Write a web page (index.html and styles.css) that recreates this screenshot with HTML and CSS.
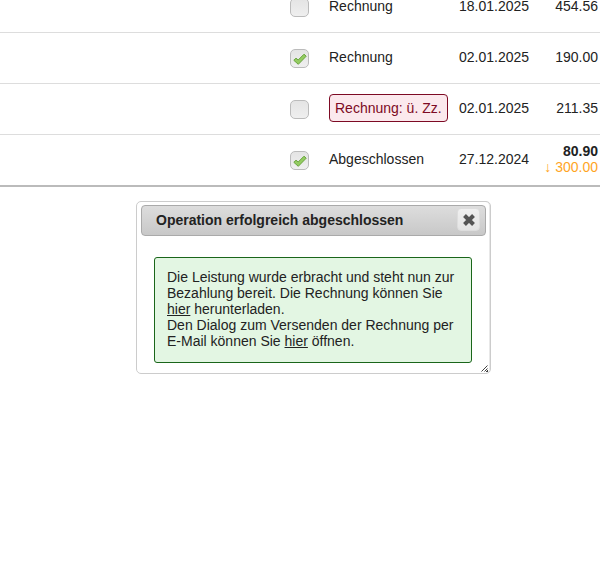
FILE: index.html
```html
<!DOCTYPE html>
<html lang="de">
<head>
    <meta charset="UTF-8">
    <meta name="viewport" content="width=device-width, initial-scale=1.0">
    <title>Leistungen</title>
    <link rel="stylesheet" href="styles.css">
</head>
<body>
    <table class="invoices">
        <tbody>
            <tr>
                <td class="select"><label class="check"><input type="checkbox" aria-label="Rechnung 18.01.2025"><svg viewBox="0 0 14 14"><path d="M0.8 8.3 3 6.2 5.2 8 11 2.2 13.2 4.2 5.3 12.3Z"/></svg></label></td>
                <td class="status">Rechnung</td>
                <td class="date">18.01.2025</td>
                <td class="amount">454.56</td>
            </tr>
            <tr>
                <td class="select"><label class="check"><input type="checkbox" aria-label="Rechnung 02.01.2025" checked><svg viewBox="0 0 14 14"><path d="M0.8 8.3 3 6.2 5.2 8 11 2.2 13.2 4.2 5.3 12.3Z"/></svg></label></td>
                <td class="status">Rechnung</td>
                <td class="date">02.01.2025</td>
                <td class="amount">190.00</td>
            </tr>
            <tr>
                <td class="select"><label class="check"><input type="checkbox" aria-label="Rechnung: ü. Zz. 02.01.2025"><svg viewBox="0 0 14 14"><path d="M0.8 8.3 3 6.2 5.2 8 11 2.2 13.2 4.2 5.3 12.3Z"/></svg></label></td>
                <td class="status"><span class="overdue">Rechnung: ü. Zz.</span></td>
                <td class="date">02.01.2025</td>
                <td class="amount">211.35</td>
            </tr>
            <tr>
                <td class="select"><label class="check"><input type="checkbox" aria-label="Abgeschlossen 27.12.2024" checked><svg viewBox="0 0 14 14"><path d="M0.8 8.3 3 6.2 5.2 8 11 2.2 13.2 4.2 5.3 12.3Z"/></svg></label></td>
                <td class="status">Abgeschlossen</td>
                <td class="date">27.12.2024</td>
                <td class="amount"><strong>80.90</strong><br><span class="open">↓ 300.00</span></td>
            </tr>
        </tbody>
    </table>

    <div class="dialog" role="dialog" aria-labelledby="dialog-title">
        <div class="titlebar">
            <span id="dialog-title">Operation erfolgreich abgeschlossen</span>
            <button type="button" class="close" id="close-dialog" aria-label="Schliessen">
                <svg viewBox="0 0 14 14"><path d="M2.5 2.5 11.5 11.5M11.5 2.5 2.5 11.5"/></svg>
            </button>
        </div>
        <div class="message">
            Die Leistung wurde erbracht und steht nun zur Bezahlung bereit. Die Rechnung können Sie <a href="#">hier</a> herunterladen.<br>
            Den Dialog zum Versenden der Rechnung per E-Mail können Sie <a href="#">hier</a> öffnen.
        </div>
        <svg class="grip" viewBox="0 0 7 7"><path d="M0.5 6.5 6.5 0.5M3.5 6.5 6.5 3.5"/><path d="M5 7 7 5V7Z"/></svg>
    </div>

    <script>
        document.getElementById('close-dialog').addEventListener('click', () => {
            document.querySelector('.dialog').style.display = 'none';
        });
    </script>
</body>
</html>
```
FILE: styles.css
```css
body {
    margin: 0;
    overflow: hidden;
    background: white;
    color: #222;
    font-family: "Liberation Sans", Arial, sans-serif;
    font-size: 14px;
    line-height: 16px;
}
/* the list is scrolled, its first row is cut off at the top */
.invoices {
    width: 100%;
    margin-top: -18px;
    border-collapse: separate;
    border-spacing: 0;
    table-layout: fixed;
    border-bottom: 1px solid #bbb;
}
.invoices td {
    height: 48px;
    padding: 0 0 2px;
    border-bottom: 1px solid #ddd;
    vertical-align: middle;
}
.invoices tr:last-child td {
    border-bottom-color: #bbb;
}
.invoices .select {
    padding-right: 20px;
}
.invoices .status {
    width: 130px;
}
.invoices .date {
    width: 80px;
}
.invoices .amount {
    width: 59px;
    padding-right: 2px;
    text-align: right;
}
.open {
    color: #ffa51f;
}
.overdue {
    display: inline-block;
    padding: 5px;
    border: 1px solid #7d0a24;
    border-radius: 4px;
    background: #fbe9ed;
    color: #7d0a24;
}
.check {
    display: grid;
    width: 19px;
    height: 19px;
    margin: 3px 0 0 auto;
    place-items: center;
}
.check input,
.check svg {
    grid-area: 1 / 1;
}
.check input {
    appearance: none;
    box-sizing: border-box;
    width: 19px;
    height: 19px;
    margin: 0;
    border: 1px solid #bbb;
    border-radius: 5px;
    background: linear-gradient(#e4e4e4, #efefef);
}
.check svg {
    width: 14px;
    height: 14px;
    fill: #94cc62;
    stroke: #68a33c;
    stroke-linejoin: round;
    visibility: hidden;
    pointer-events: none;
}
.check input:checked + svg {
    visibility: visible;
}
.dialog {
    position: relative;
    box-sizing: border-box;
    width: 355px;
    margin: 14px 0 0 136px;
    padding: 3px 4px;
    border: 1px solid #ccc;
    border-radius: 5px;
    background: white;
    box-shadow: inset -1px 0 #e8e8e8;
}
.titlebar {
    display: flex;
    align-items: center;
    justify-content: space-between;
    box-sizing: border-box;
    height: 31px;
    padding: 0 5px 2px 14px;
    border: 1px solid #aaa;
    border-radius: 4px;
    background: linear-gradient(#ddd, #c8c8c8);
    font-weight: bold;
}
.close {
    display: grid;
    place-items: center;
    width: 23px;
    height: 23px;
    padding: 0;
    border: 1px solid #ddd;
    border-radius: 4px;
    background: linear-gradient(#f0f0f0, #e4e4e4);
    cursor: pointer;
}
.close svg {
    width: 14px;
    height: 14px;
    fill: none;
    stroke: #555;
    stroke-width: 4;
}
.message {
    margin: 21px 14px 7px 13px;
    padding: 11px 12px 13px;
    border: 1px solid #1a661a;
    border-radius: 3px;
    background: #e3f6e3;
}
.message a {
    color: inherit;
}
.grip {
    position: absolute;
    right: 2px;
    bottom: 1px;
    width: 7px;
    height: 7px;
    fill: #444;
    stroke: #444;
    cursor: se-resize;
}
```
